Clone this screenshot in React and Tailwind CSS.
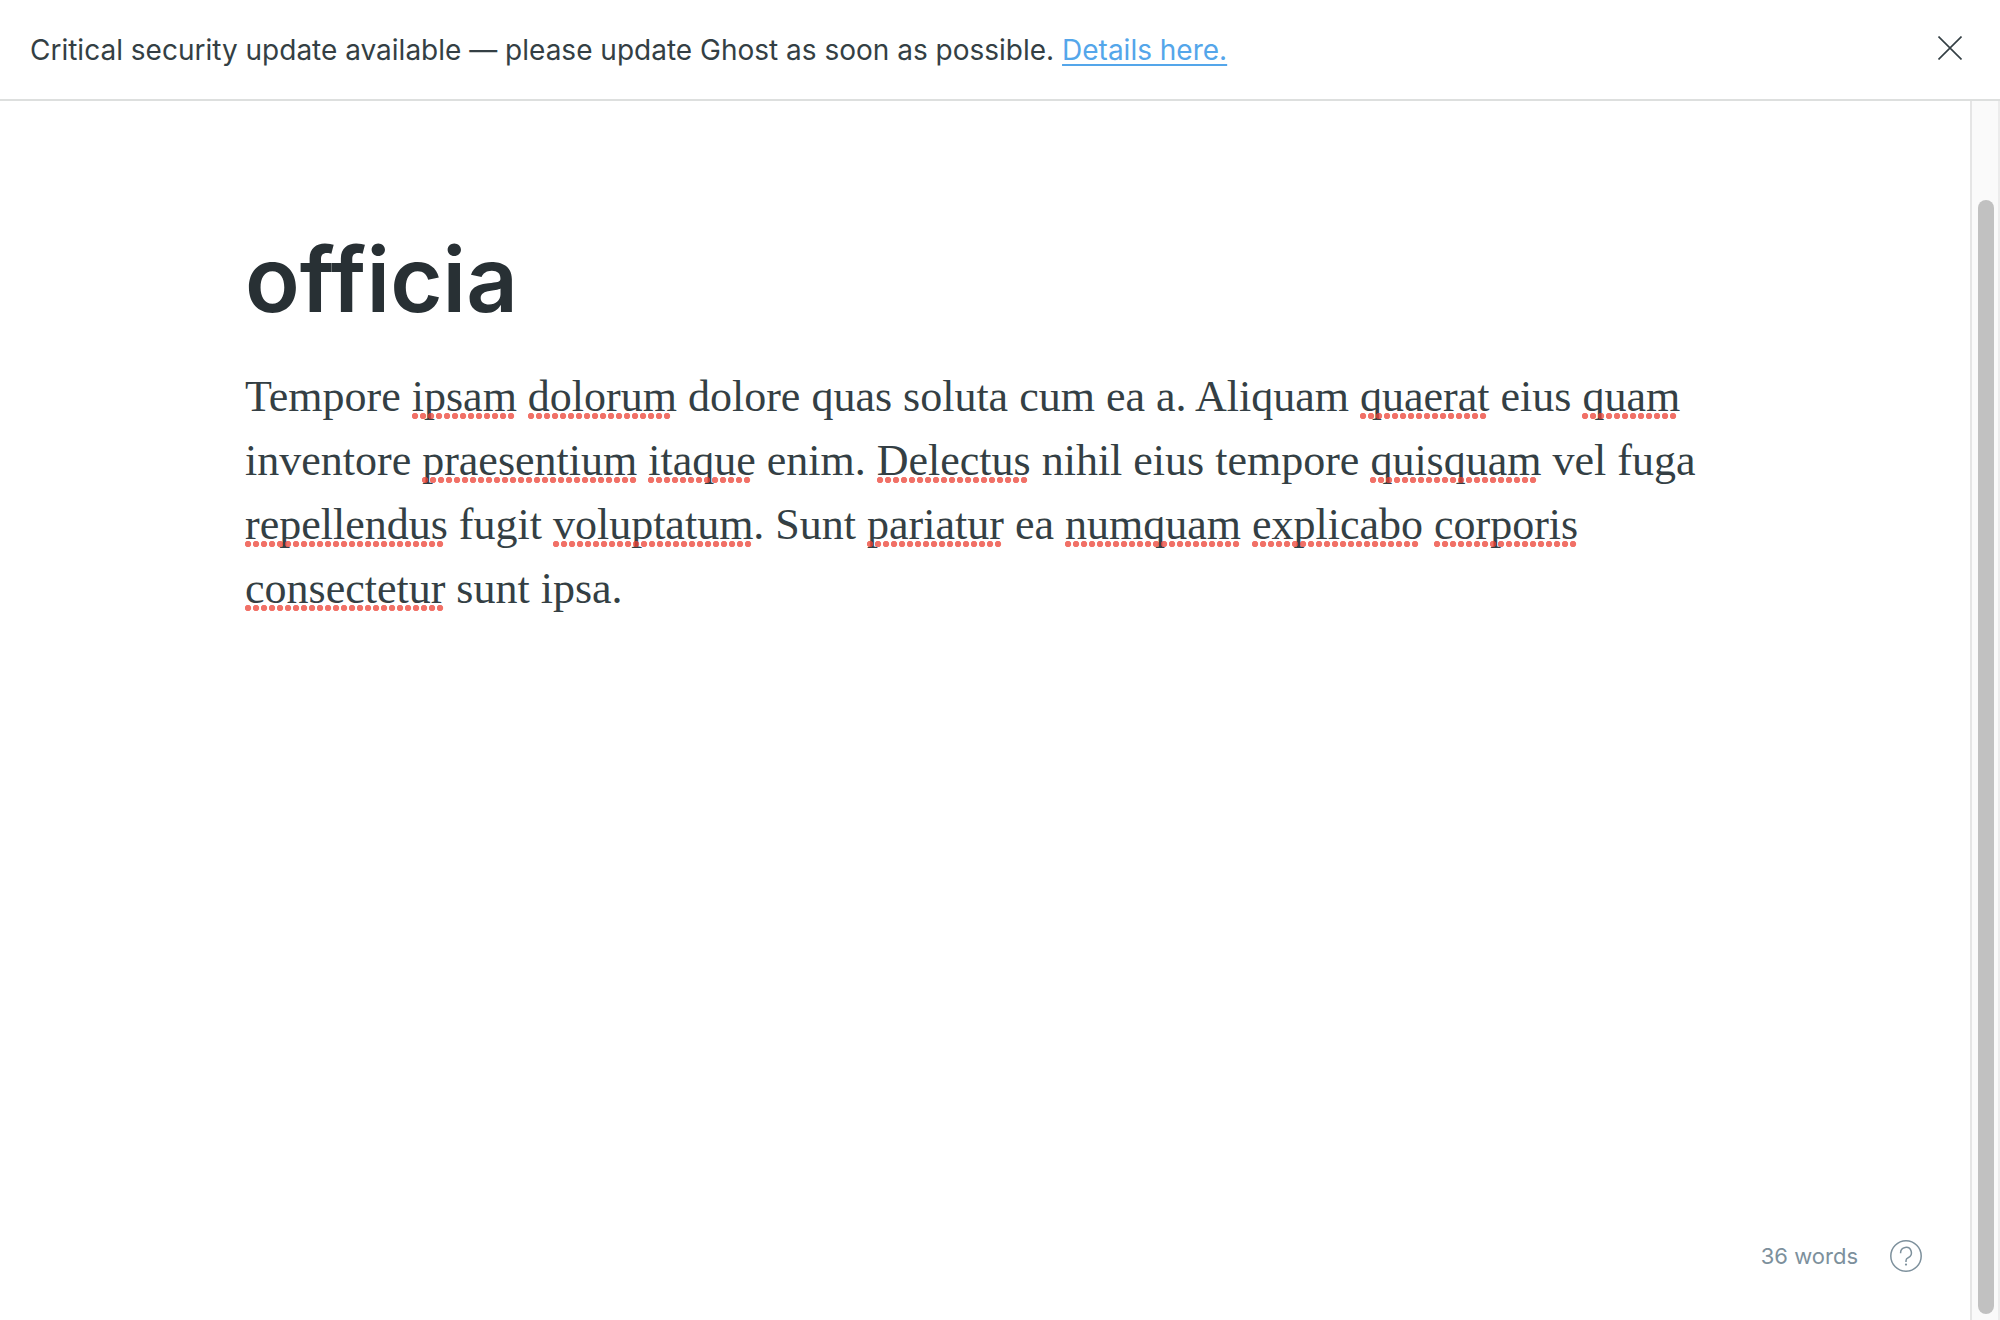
import React from "react";

const PARTS = [
  "Tempore ", ["ipsam"], " ", ["dolorum"], " dolore quas soluta cum ea a. Aliquam ", ["quaerat"], " eius ", ["quam"],
  " inventore ", ["praesentium"], " ", ["itaque"], " enim. ", ["Delectus"], " nihil eius tempore ", ["quisquam"],
  " vel fuga ", ["repellendus"], " fugit ", ["voluptatum"], ". Sunt ", ["pariatur"], " ea ", ["numquam"], " ",
  ["explicabo"], " ", ["corporis"], " ", ["consectetur"], " sunt ipsa.",
];

function Misspelled({ children }) {
  return (
    <span className="relative after:absolute after:bottom-[2px] after:left-0 after:h-[6px] after:w-[round(down,calc(100%+2px),8px)] after:bg-[radial-gradient(circle_at_3px_3px,#ec4134bf_2.8px,transparent_3.6px)] after:bg-size-[8px_6px] after:content-['']">
      {children}
    </span>
  );
}

export default function App() {
  return (
    <div className="flex h-screen flex-col bg-white font-['Inter',sans-serif] text-[#343f44]">
      <aside className="flex h-[101px] shrink-0 items-center justify-between border-b-2 border-[#dddfde] pr-[38px] pl-[30px]">
        <p className="text-[28px] leading-[40px]">
          Critical security update available — please update Ghost as soon as possible.{" "}
          <a href="#details" className="text-[#54a6ea] underline decoration-2 underline-offset-4">Details here.</a>
        </p>
        <button type="button" aria-label="Close notification" className="pb-1 text-[#343f44]">
          <svg viewBox="0 0 24 24" className="size-6" fill="none" stroke="currentColor" strokeWidth="1.6">
            <path d="M0.5 0.5 23.5 23.5M23.5 0.5 0.5 23.5" />
          </svg>
        </button>
      </aside>

      <div className="flex min-h-0 flex-1">
        <main className="flex flex-1 flex-col">
          <div className="mx-auto w-full max-w-[1480px] flex-1 pt-[122px]">
            <input
              aria-label="Post title"
              defaultValue="officia"
              spellCheck={false}
              className="block h-[112px] w-full bg-transparent text-[90px] font-semibold text-[#283034] outline-none"
            />
            <div role="textbox" aria-label="Post content" aria-multiline="true" className="mt-[30px] font-['Liberation_Serif',serif] text-[44px] leading-[64px]">
              <p>
                {PARTS.map((p, i) => (typeof p === "string" ? p : <Misspelled key={i}>{p[0]}</Misspelled>))}
              </p>
            </div>
          </div>
          <footer className="flex items-center justify-end gap-8 pr-12 pb-12 text-[#7d909c]">
            <span className="text-[22px] leading-[32px]">36 words</span>
            <a href="#help" aria-label="Help">
              <svg viewBox="0 0 32 32" className="size-8" fill="none" stroke="currentColor" strokeWidth="1.5">
                <circle cx="16" cy="16" r="15.2" />
                <path d="M10.6 13.2V12.800a5.400 5.400 0 1 1 7.600 4.900c-1.400.7-2.200 1.600-2.200 3v1.200" />
                <circle cx="16" cy="24.6" r="1.1" fill="currentColor" stroke="none" />
              </svg>
            </a>
          </footer>
        </main>
        <div aria-hidden="true" className="flex w-[30px] shrink-0 justify-end border-r-2 border-l-2 border-r-[#ececec] border-l-[#e5e5e5] bg-[#fafafa] pt-[99px] pr-1 pb-[6px]">
          <div className="w-4 rounded-full bg-[#c1c1c1]" />
        </div>
      </div>
    </div>
  );
}
